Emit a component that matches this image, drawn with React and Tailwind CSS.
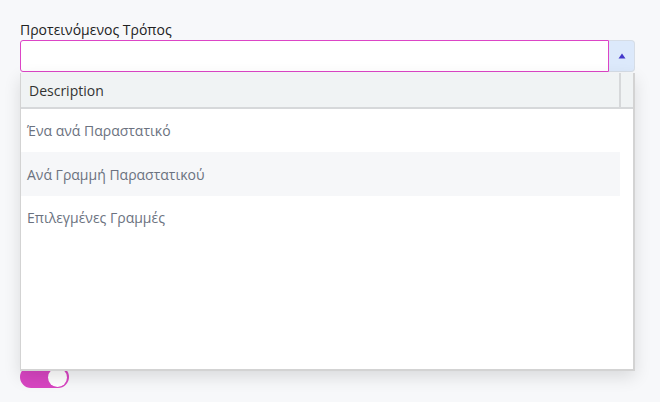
import React from "react";

export default function App() {
  const rows = ["Ένα ανά Παραστατικό", "Ανά Γραμμή Παραστατικού", "Επιλεγμένες Γραμμές"];
  return (
    <div className="relative w-[660px] h-[402px] bg-[#f7f8fa] overflow-hidden" style={{ fontFamily: '"Open Sans", "Noto Sans", sans-serif' }}>
      <div className="pt-[20px] pl-[20px] pr-[25px]">
        <div className="text-[14px] leading-[20px] text-[#222] h-[20px]">Προτεινόμενος Τρόπος</div>
        <div className="flex h-[32px]">
          <div className="flex-1 bg-white border border-[#dc45c6] rounded-l-[3px]" />
          <div className="w-[26px] bg-[#dce9fb] border border-[#d6dde6] border-l-0 rounded-r-[4px] flex items-center justify-center">
            <svg width="8" height="6" viewBox="0 0 8 6"><path d="M4 0.5 L7.5 5.5 L0.5 5.5 Z" fill="#4338ca" /></svg>
          </div>
        </div>
        <div className="mt-[294px] w-[49px] h-[22px] rounded-full bg-[#d845c2] flex items-center justify-end pr-[2px]">
          <div className="w-[19px] h-[19px] rounded-full bg-white" />
        </div>
      </div>
      <div className="absolute left-[20px] top-[73px] w-[615px] h-[298px] bg-white border-l border-r-2 border-b-2 border-[#d3d3d3] shadow-[0_6px_16px_rgba(0,0,0,0.12)] flex flex-col">
        <div className="flex h-[36px] bg-[#f0f3f4] border-b-2 border-[#d6d8da] shrink-0">
          <div className="w-[600px] border-r-2 border-[#d6d8da] flex items-center pl-[8px] text-[14px] text-[#333]">Description</div>
          <div className="flex-1" />
        </div>
        <div className="w-[599px]">
          {rows.map((r, i) => (
            <div key={r} className={`flex items-center pl-[6px] text-[14px] text-[#6b7280] ${i === 1 ? "bg-[#f6f7f9] h-[44px]" : "h-[43px]"}`}>{r}</div>
          ))}
        </div>
      </div>
    </div>
  );
}
